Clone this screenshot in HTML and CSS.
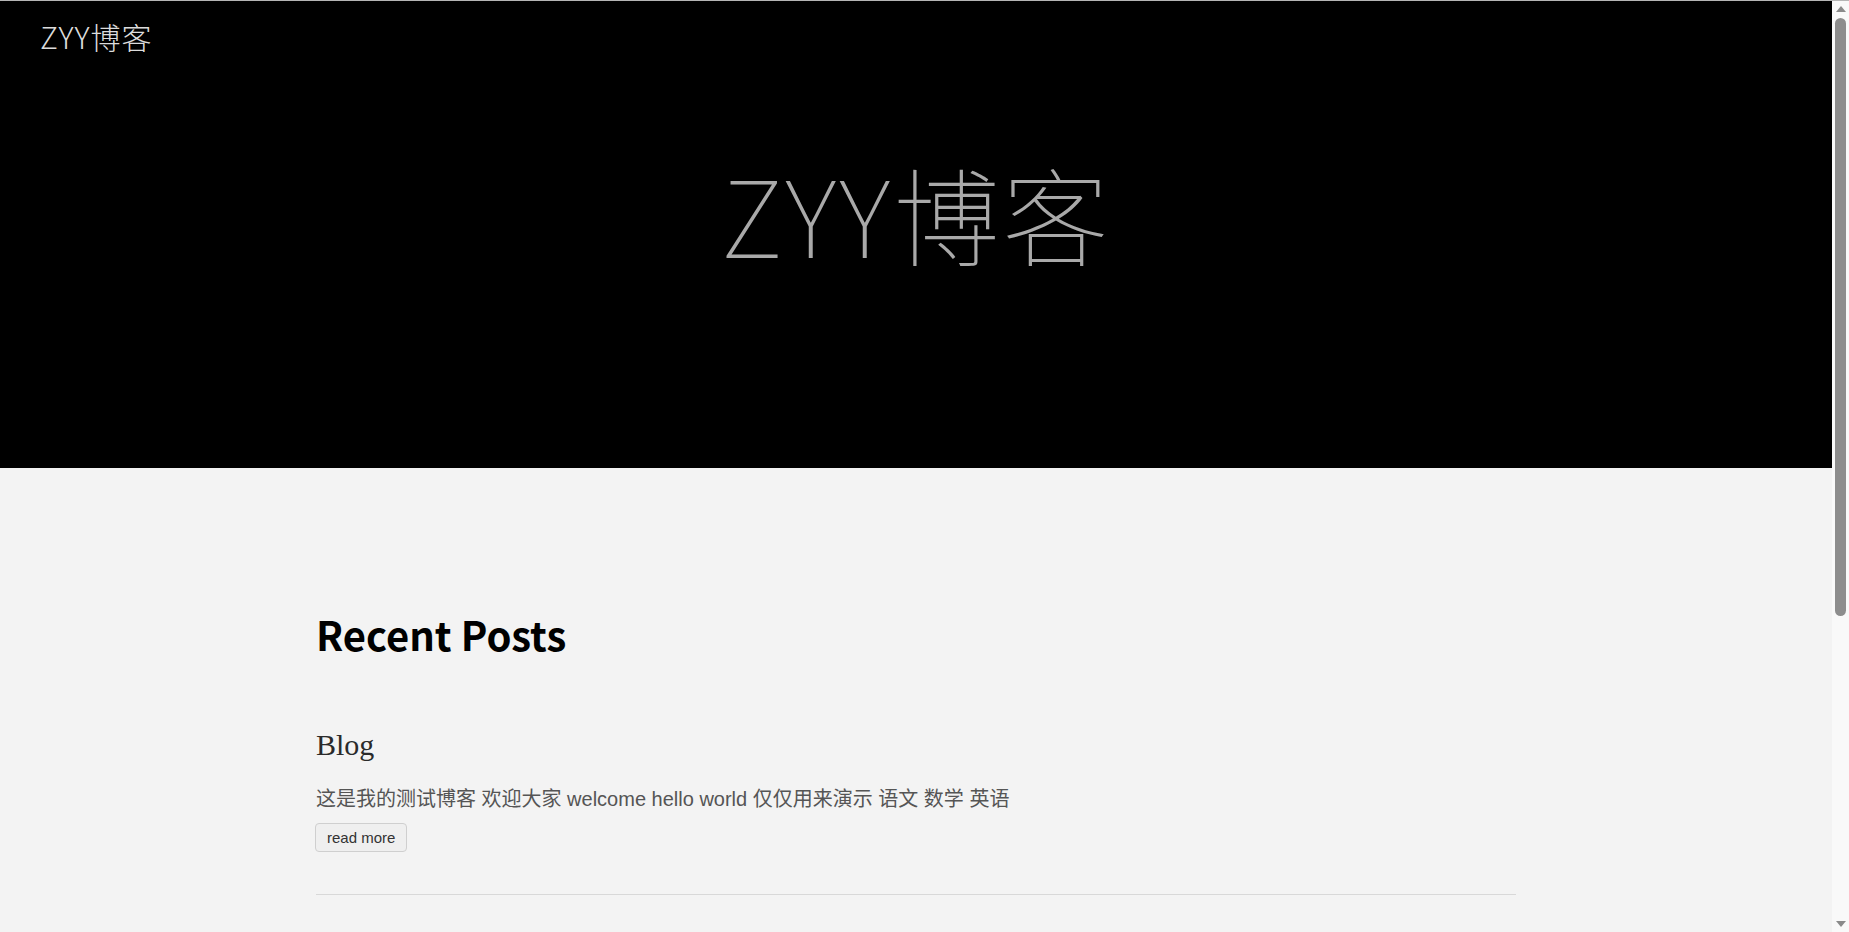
FILE: index.html
```html
<!DOCTYPE html>
<html lang="zh-CN">
<head>
<meta charset="utf-8">
<title>ZYY博客</title>
<link rel="stylesheet" href="styles.css">
</head>
<body>
<header class="site-header">
  <nav class="topnav">
    <a class="brand" href="#">ZYY博客</a>
  </nav>
  <div class="hero">
    <h1 class="hero-title">ZYY博客</h1>
  </div>
</header>
<main class="content">
  <h2 class="section-title">Recent Posts</h2>
  <article class="post">
    <h3 class="post-title">Blog</h3>
    <p class="post-summary">这是我的测试博客 欢迎大家 welcome hello world 仅仅用来演示 语文 数学 英语</p>
    <button class="read-more" type="button">read more</button>
  </article>
  <hr class="divider">
  <div class="below"></div>
</main>
<div class="fake-scrollbar" aria-hidden="true">
  <span class="sb-arrow sb-up"></span>
  <span class="sb-thumb"></span>
  <span class="sb-arrow sb-down"></span>
</div>
</body>
</html>
```

FILE: styles.css
```css
html, body {
  margin: 0;
  padding: 0;
}
body {
  background: #f3f3f3;
  font-family: "Liberation Sans", "Noto Sans CJK SC", sans-serif;
  border-top: 1px solid #b5b5b5;
  padding-right: 17px;
}
.site-header {
  background: #000;
  height: 467px;
  display: flex;
  flex-direction: column;
}
.topnav {
  padding: 16px 0 0 40px;
  height: 41px;
}
.brand {
  color: #dcdcdc;
  text-decoration: none;
  font-family: "Noto Sans CJK SC", sans-serif;
  font-weight: 300;
  font-size: 30px;
  letter-spacing: 1px;
  line-height: 38px;
}
.hero {
  display: flex;
  justify-content: center;
  padding-top: 94px;
}
.hero-title {
  margin: 0;
  color: #a9a9a9;
  font-family: "Noto Sans CJK SC", sans-serif;
  font-weight: 100;
  font-size: 106px;
  letter-spacing: 3px;
  line-height: 120px;
}
.content {
  width: 1200px;
  margin: 0 auto;
  padding-top: 142px;
}
.section-title {
  margin: 0;
  color: #000;
  font-family: "Noto Sans CJK SC", sans-serif;
  font-weight: 700;
  font-size: 40px;
  line-height: 48px;
}
.post {
  padding-top: 69px;
}
.post-title {
  margin: 0;
  color: #2a2a2a;
  font-family: "Liberation Serif", serif;
  font-weight: 400;
  font-size: 30px;
  line-height: 36px;
}
.post-summary {
  margin: 22px 0 0;
  color: #555;
  font-size: 20px;
  line-height: 28px;
}
.read-more {
  margin-top: 10px;
  margin-left: -1px;
  display: block;
  font-family: "Liberation Sans", sans-serif;
  font-size: 15px;
  color: #333;
  background: #efefef;
  border: 1px solid #cfcfcf;
  border-radius: 4px;
  height: 29px;
  padding: 0 11px;
}
.divider {
  margin: 42px 0 0;
  border: 0;
  border-top: 1px solid #d8d8d8;
}
.below {
  height: 500px;
}
.fake-scrollbar {
  position: fixed;
  top: 1px;
  right: 0;
  bottom: 0;
  width: 17px;
  background: #f9f9f9;
  display: flex;
  flex-direction: column;
  align-items: center;
}
.sb-arrow {
  width: 0;
  height: 0;
  border-left: 5px solid transparent;
  border-right: 5px solid transparent;
}
.sb-up {
  margin-top: 5px;
  border-bottom: 6px solid #8a8a8a;
}
.sb-thumb {
  margin-top: 6px;
  width: 11px;
  height: 598px;
  border-radius: 6px;
  background: #8d8d8d;
}
.sb-down {
  margin-top: auto;
  margin-bottom: 5px;
  border-top: 6px solid #8a8a8a;
}
```
